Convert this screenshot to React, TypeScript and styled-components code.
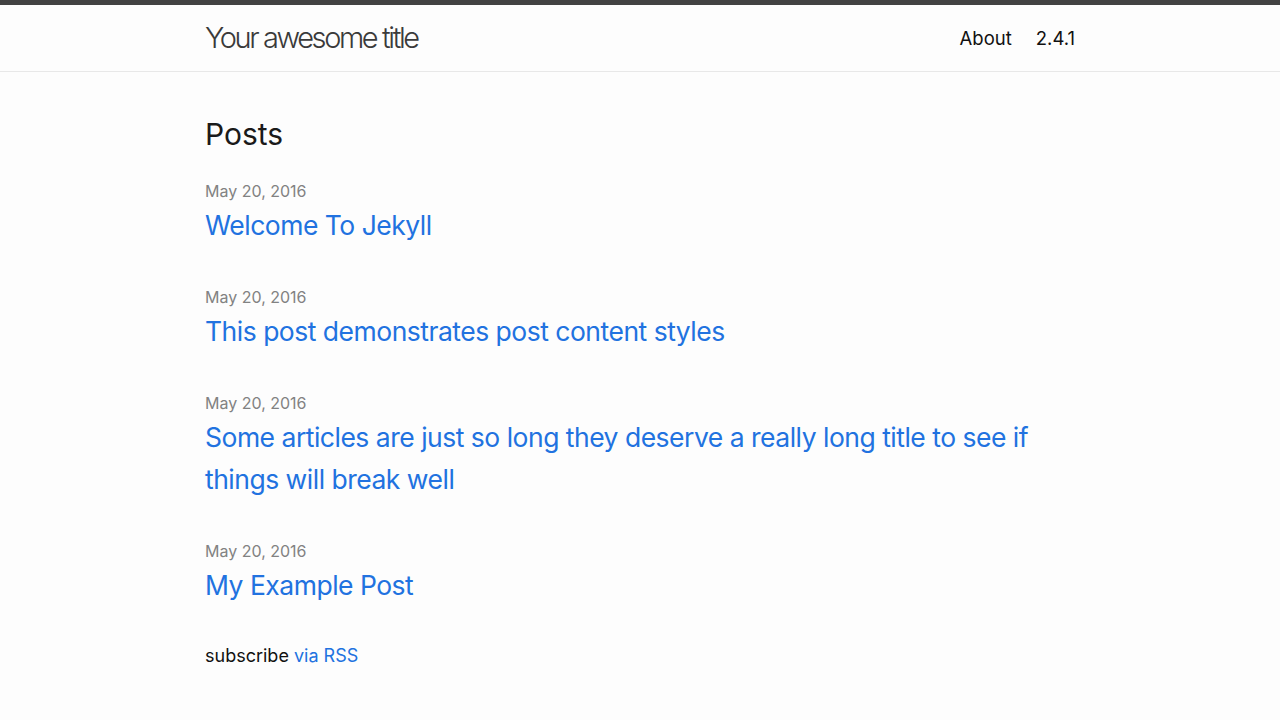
import React from "react";
import styled, { createGlobalStyle } from "styled-components";

const Global = createGlobalStyle`
  html, body { margin: 0; padding: 0; }
  body {
    background: #fdfdfd;
    color: #111111;
    font-family: Inter, "Noto Sans", "Liberation Sans", sans-serif;
    -webkit-font-smoothing: antialiased;
  }
  * { box-sizing: border-box; }
`;

const Header = styled.header`
  border-top: 5px solid #424242;
  border-bottom: 1px solid #e8e8e8;
  height: 72px;
`;

const Wrapper = styled.div`
  width: 870px;
  margin: 0 auto;
`;

const HeaderInner = styled(Wrapper)`
  display: flex;
  justify-content: space-between;
  align-items: center;
  height: 66px;
`;

const SiteTitle = styled.a`
  font-size: 29px;
  font-weight: 300;
  letter-spacing: -2.4px;
  color: #3a3a3a;
  text-decoration: none;
  line-height: 66px;
`;

const Nav = styled.nav`
  display: flex;
  gap: 24px;
`;

const NavLink = styled.a`
  font-size: 18.5px;
  color: #111111;
  text-decoration: none;
  line-height: 66px;
`;

const Main = styled(Wrapper)`
  padding-top: 38px;
`;

const Heading = styled.h2`
  margin: 0 0 20px;
  font-size: 30px;
  font-weight: 400;
  line-height: 48px;
  color: #1a1a1a;
`;

const PostList = styled.ul`
  list-style: none;
  margin: 0;
  padding: 0;
`;

const PostItem = styled.li`
  margin-bottom: 38px;
`;

const Meta = styled.span`
  display: block;
  font-size: 16px;
  line-height: 26px;
  color: #828282;
`;

const PostLink = styled.a`
  display: block;
  font-size: 26.5px;
  letter-spacing: -0.5px;
  line-height: 42px;
  color: #2172e0;
  text-decoration: none;
`;

const Subscribe = styled.p`
  margin: 0;
  font-size: 18px;
  line-height: 24px;
  color: #111111;
`;

const RssLink = styled.a`
  color: #2172e0;
  text-decoration: none;
`;

const posts = [
  "Welcome To Jekyll",
  "This post demonstrates post content styles",
  "Some articles are just so long they deserve a really long title to see if things will break well",
  "My Example Post",
];

export default function App() {
  return (
    <>
      <Global />
      <Header>
        <HeaderInner>
          <SiteTitle href="#">Your awesome title</SiteTitle>
          <Nav>
            <NavLink href="#">About</NavLink>
            <NavLink href="#">2.4.1</NavLink>
          </Nav>
        </HeaderInner>
      </Header>
      <Main as="main">
        <Heading>Posts</Heading>
        <PostList>
          {posts.map((p) => (
            <PostItem key={p}>
              <Meta>May 20, 2016</Meta>
              <PostLink href="#">{p}</PostLink>
            </PostItem>
          ))}
        </PostList>
        <Subscribe>
          subscribe <RssLink href="#">via RSS</RssLink>
        </Subscribe>
      </Main>
    </>
  );
}
